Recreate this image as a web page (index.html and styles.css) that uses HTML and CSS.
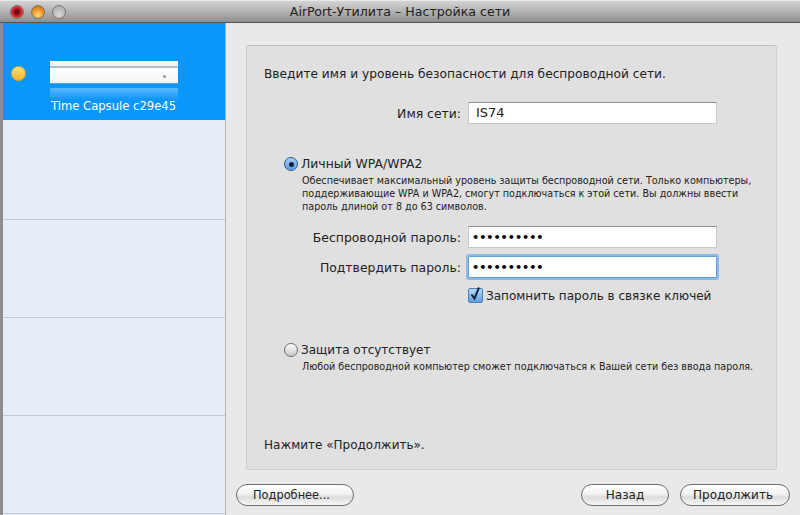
FILE: index.html
```html
<!DOCTYPE html>
<html lang="ru">
<head>
    <meta charset="UTF-8">
    <title>AirPort-Утилита</title>
    <link rel="stylesheet" href="styles.css">
</head>
<body>
    <div class="window">
        <div class="titlebar">
            <div class="lights">
                <span class="light red"></span>
                <span class="light orange"></span>
                <span class="light grey"></span>
            </div>
            <div class="title">AirPort-Утилита – Настройка сети</div>
        </div>
        <div class="content">
            <div class="sidebar">
                <div class="device selected">
                    <span class="status"></span>
                    <div class="device-info">
                        <div class="capsule">
                            <div class="capsule-top"></div>
                            <div class="capsule-body"><span class="capsule-dot"></span></div>
                            <div class="capsule-shine"></div>
                        </div>
                        <div class="device-name">Time Capsule c29e45</div>
                    </div>
                </div>
                <div class="device"></div>
                <div class="device"></div>
                <div class="device"></div>
                <div class="device"></div>
            </div>
            <div class="main">
                <div class="panel">
                    <p class="intro">Введите имя и уровень безопасности для беспроводной сети.</p>
                    <div class="field name-field">
                        <label>Имя сети:</label>
                        <div class="input">IS74</div>
                    </div>

                    <div class="option first-option">
                        <span class="radio checked"></span>
                        <span>Личный WPA/WPA2</span>
                    </div>
                    <p class="desc">Обеспечивает максимальный уровень защиты беспроводной сети. Только компьютеры,<br>поддерживающие WPA и WPA2, смогут подключаться к этой сети. Вы должны ввести<br>пароль длиной от 8 до 63 символов.</p>
                    <div class="field pass-field">
                        <label>Беспроводной пароль:</label>
                        <div class="input dots">••••••••••</div>
                    </div>
                    <div class="field confirm-field">
                        <label>Подтвердить пароль:</label>
                        <div class="input dots focused">••••••••••</div>
                    </div>
                    <div class="remember">
                        <span class="checkbox">
                            <svg width="15" height="16" viewBox="0 0 15 16"><path d="M3.5 8.5l3 4 4.5-11" fill="none" stroke="#10243f" stroke-width="2"/></svg>
                        </span>
                        <span>Запомнить пароль в связке ключей</span>
                    </div>

                    <div class="option second-option">
                        <span class="radio"></span>
                        <span>Защита отсутствует</span>
                    </div>
                    <p class="desc">Любой беспроводной компьютер сможет подключаться к Вашей сети без ввода пароля.</p>

                    <p class="hint">Нажмите «Продолжить».</p>
                </div>
                <div class="buttons">
                    <button class="btn more">Подробнее...</button>
                    <button class="btn back">Назад</button>
                    <button class="btn next">Продолжить</button>
                </div>
            </div>
        </div>
    </div>
</body>
</html>
```

FILE: styles.css
```css
* {
    box-sizing: border-box;
}
html, body {
    margin: 0;
    height: 515px;
    overflow: hidden;
}
body {
    font-family: "DejaVu Sans", sans-serif;
    font-size: 12px;
    color: #222;
    background: #e9e9e9;
}
.window {
    height: 515px;
    display: flex;
    flex-direction: column;
}

/* title bar */
.titlebar {
    height: 23px;
    display: flex;
    align-items: center;
    background: linear-gradient(#d4d4d4, #b9b9b9 40%, #8f8f8f);
    border-top: 1px solid #e8e8e8;
    border-bottom: 1px solid #555;
    position: relative;
}
.lights {
    display: flex;
    gap: 7px;
    padding-left: 10px;
}
.light {
    width: 14px;
    height: 14px;
    border-radius: 50%;
    border: 1px solid #777;
}
.light.red {
    background: radial-gradient(circle at 50% 50%, #6b0a12 18%, #d0202c 50%, #f08088);
}
.light.orange {
    background: radial-gradient(circle at 50% 75%, #ffd878, #e88a1c 60%, #b9650f);
}
.light.grey {
    background: radial-gradient(circle at 50% 75%, #d8d8d8, #a6a6a6);
}
.title {
    position: absolute;
    left: 0;
    right: 0;
    text-align: center;
    font-size: 12.6px;
    color: #222;
}

.content {
    flex: 1;
    display: flex;
    min-height: 0;
}

/* device list */
.sidebar {
    flex: none;
    width: 226px;
    border-left: 3px solid #8e8e8e;
    border-right: 1px solid #b4b4b4;
    background: #e6edf7;
}
.device {
    height: 98px;
    border-bottom: 1px solid #c6cad0;
}
.device.selected {
    height: 97px;
    border-bottom: none;
    background: #0a96fb;
    display: flex;
    align-items: flex-start;
    padding-left: 8px;
    margin-bottom: 2px;
}
.status {
    flex: none;
    width: 15px;
    height: 15px;
    border-radius: 50%;
    background: linear-gradient(#ffe27a, #f4b32f);
    border: 1px solid #e2a52e;
    margin-top: 43px;
}
.device-info {
    margin-left: 24px;
    width: 128px;
}
.capsule {
    margin-top: 38px;
}
.capsule-top {
    height: 7px;
    background: linear-gradient(#fff, #eee);
    border-bottom: 2px solid #b4bcc4;
}
.capsule-body {
    height: 16px;
    background: linear-gradient(#fff, #f4f4f4);
    border-bottom: 1px solid #5a9fd8;
    position: relative;
}
.capsule-dot {
    position: absolute;
    right: 12px;
    top: 7px;
    width: 3px;
    height: 3px;
    border-radius: 50%;
    background: #999;
}
.capsule-shine {
    height: 12px;
    margin-top: 4px;
    background: linear-gradient(#5cb6fc, #0a96fb);
}
.device-name {
    color: #fff;
    font-size: 11.6px;
    margin-top: -1px;
    white-space: nowrap;
    padding-left: 1px;
}

/* main area */
.main {
    flex: 1;
    min-width: 0;
    padding: 22px 23px 0 20px;
    background: #e9e9e9;
}
.panel {
    height: 425px;
    background: #e0e0e0;
    border: 1px solid #cfcfcf;
    border-top-color: #bdbdbd;
    border-radius: 3px;
    padding: 20px 0 0 17px;
}
.panel p {
    margin: 0;
}
.intro {
    font-size: 12.2px;
    line-height: 16px;
}
.field {
    display: flex;
    align-items: center;
    gap: 7px;
    font-size: 12.4px;
}
.field label {
    width: 197px;
    text-align: right;
    white-space: nowrap;
}
.input {
    width: 249px;
    height: 22px;
    background: #fff;
    border: 1px solid #c8c8c8;
    border-top-color: #8f8f8f;
    padding-left: 7px;
    line-height: 20px;
    font-size: 13px;
}
.input.dots {
    font-size: 11.2px;
    font-weight: bold;
    color: #000;
    padding-left: 3px;
    line-height: 21px;
}
.input.focused {
    border: 1px solid #5f9fdc;
    outline: 2px solid #8db9e6;
    border-radius: 1px;
}
.name-field {
    margin-top: 20px;
}
.option {
    display: flex;
    align-items: center;
    gap: 3px;
    font-size: 12px;
    line-height: 16px;
    margin-left: 20px;
}
.first-option {
    margin-top: 32px;
    font-size: 12.4px;
}
.second-option {
    margin-top: 39px;
}
.radio {
    width: 14px;
    height: 14px;
    border-radius: 50%;
    border: 1px solid #6d6d6d;
    background: linear-gradient(#fdfdfd, #c8c8c8);
    display: flex;
    align-items: center;
    justify-content: center;
}
.radio.checked {
    border-color: #2a5b94;
    background: linear-gradient(#a8cdf2, #5b9ee2);
}
.radio.checked::after {
    content: "";
    width: 5px;
    height: 5px;
    border-radius: 50%;
    background: #0d2138;
}
.desc {
    font-size: 9.6px;
    line-height: 13px;
    margin: 2px 0 0 38px !important;
    white-space: nowrap;
}
.pass-field {
    margin-top: 13px;
}
.confirm-field {
    margin-top: 8px;
}
.remember {
    display: flex;
    align-items: center;
    gap: 3px;
    font-size: 12px;
    margin: 10px 0 0 204px;
    white-space: nowrap;
}
.checkbox {
    width: 15px;
    height: 15px;
    border-radius: 2px;
    border: 1px solid #4d7fb5;
    background: linear-gradient(#b9d6f4, #5f9fe0);
    display: flex;
    align-items: flex-end;
    justify-content: center;
}
.checkbox svg {
    flex: none;
}
.hint {
    margin-top: 64px !important;
    line-height: 16px;
}

/* bottom buttons */
.buttons {
    display: flex;
    margin: 14px 0 0 -10px;
}
.btn {
    height: 22px;
    border-radius: 11px;
    border: 1px solid #6f6f6f;
    background: linear-gradient(#fff, #f2f2f2 45%, #dcdcdc 60%, #f7f7f7);
    font-family: inherit;
    font-size: 12px;
    color: #222;
    padding: 0;
    flex: none;
}
.more {
    width: 118px;
    font-size: 11.4px;
    padding-right: 7px;
}
.back {
    width: 88px;
    margin-left: 227px;
}
.next {
    width: 110px;
    margin-left: 11px;
    padding-right: 4px;
}
```
